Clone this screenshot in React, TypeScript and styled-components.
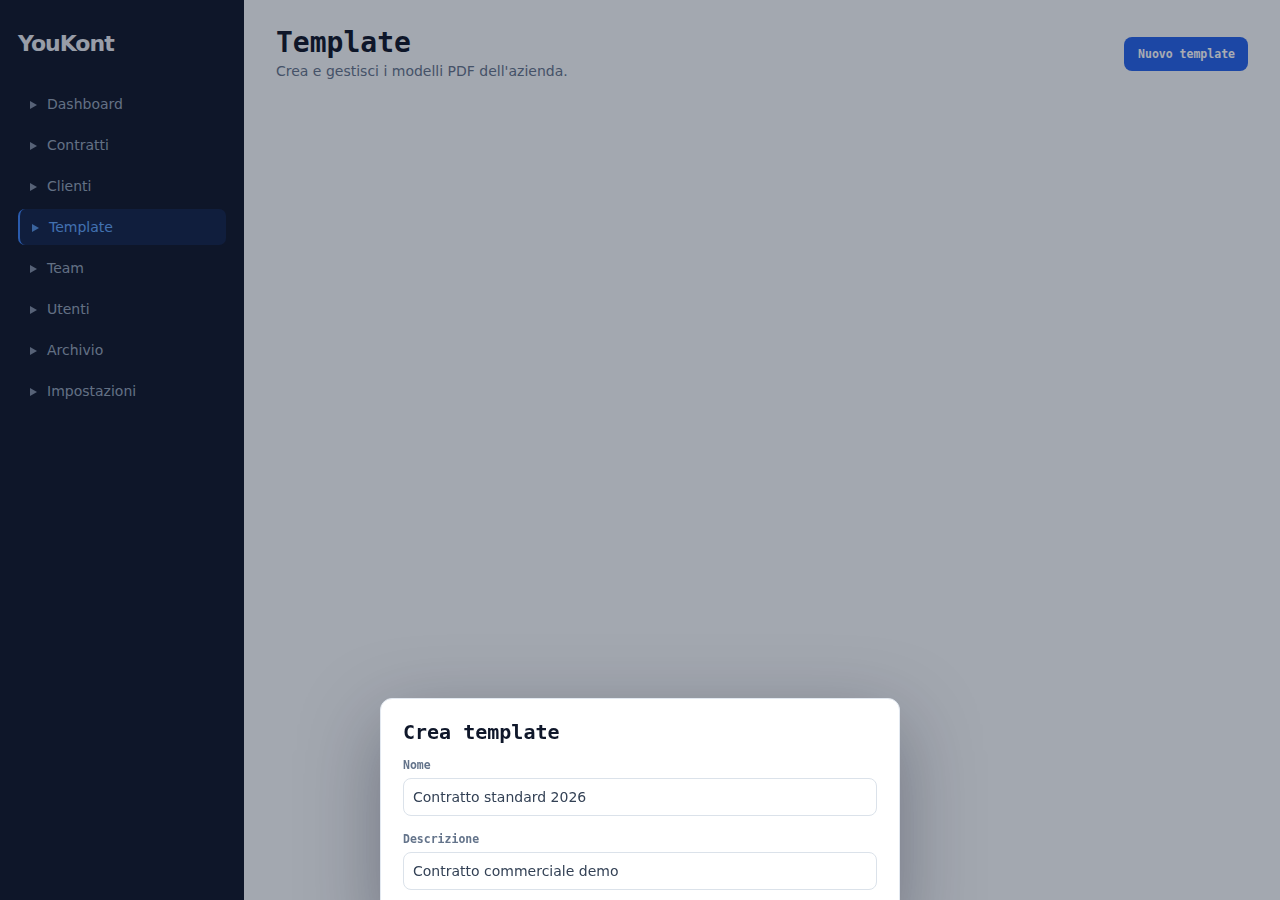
import React from "react";
import styled, { createGlobalStyle } from "styled-components";

const GlobalStyle = createGlobalStyle`
  html, body {
    margin: 0;
    padding: 0;
    background: #f8fafc;
    font-family: "DejaVu Sans", "Noto Sans", sans-serif;
    color: #0f172a;
  }
  * { box-sizing: border-box; }
`;

const MONO = `"DejaVu Sans Mono", "Liberation Mono", monospace`;

const Shell = styled.div`
  display: grid;
  grid-template-columns: 244px 1fr;
  min-height: 100vh;
`;

const Sidebar = styled.aside`
  background: #0f172a;
  padding: 31px 18px 30px;
  display: flex;
  flex-direction: column;
`;

const Brand = styled.div`
  font-family: "DejaVu Sans", sans-serif;
  font-weight: 700;
  font-size: 22px;
  line-height: 26px;
  letter-spacing: -1px;
  color: #e6eaf0;
  margin-bottom: 29px;
`;

const Nav = styled.nav`
  display: flex;
  flex-direction: column;
  gap: 5px;
`;

const NavItem = styled.a<{ $active?: boolean }>`
  display: flex;
  align-items: center;
  gap: 10px;
  height: 36px;
  padding-left: 12px;
  border-radius: 7px;
  font-size: 14px;
  text-decoration: none;
  color: ${(p) => (p.$active ? "#60a5fa" : "#94a3b8")};
  background: ${(p) => (p.$active ? "rgba(37, 99, 235, 0.16)" : "transparent")};
  border-left: ${(p) => (p.$active ? "2px solid #3b82f6" : "0")};
  cursor: pointer;
`;

const Caret = styled.span`
  width: 0;
  height: 0;
  border-top: 4px solid transparent;
  border-bottom: 4px solid transparent;
  border-left: 7px solid currentColor;
  opacity: 0.85;
  margin-top: 1px;
`;

const Main = styled.main`
  padding: 26px 32px;
`;

const Header = styled.header`
  display: flex;
  justify-content: space-between;
  align-items: center;
`;

const TitleBlock = styled.div`
  display: flex;
  flex-direction: column;
`;

const Title = styled.h1`
  margin: 0;
  font-family: ${MONO};
  font-weight: 700;
  font-size: 28px;
  line-height: 34px;
  color: #0f172a;
`;

const Subtitle = styled.p`
  margin: 2px 0 0;
  font-size: 14px;
  line-height: 18px;
  color: #64748b;
`;

const PrimaryButton = styled.button`
  font-family: ${MONO};
  font-weight: 700;
  font-size: 11.5px;
  line-height: 14px;
  color: #ffffff;
  background: #2563eb;
  border: 0;
  border-radius: 8px;
  padding: 10px 13px 10px 14px;
  cursor: pointer;
  margin-top: 2px;
`;

const Overlay = styled.div`
  position: fixed;
  inset: 0;
  background: rgba(15, 23, 42, 0.36);
  display: flex;
  justify-content: center;
  align-items: flex-start;
  padding-top: 698px;
  overflow: hidden;
`;

const Dialog = styled.div`
  width: 520px;
  background: #ffffff;
  border: 1px solid #e2e8f0;
  border-radius: 12px;
  padding: 20px 22px 22px;
  box-shadow: 0 24px 80px rgba(15, 23, 42, 0.35);
`;

const DialogTitle = styled.h2`
  margin: 0 0 13px;
  font-family: ${MONO};
  font-weight: 700;
  font-size: 20px;
  line-height: 26px;
  color: #0f172a;
`;

const Field = styled.label`
  display: flex;
  flex-direction: column;
  gap: 6px;
  margin-bottom: 16px;
`;

const FieldLabel = styled.span`
  font-family: ${MONO};
  font-weight: 700;
  font-size: 11.5px;
  line-height: 14px;
  color: #64748b;
`;

const Input = styled.input`
  height: 38px;
  padding: 0 9px;
  border: 1px solid #dbe2ea;
  border-radius: 8px;
  font-family: "DejaVu Sans", sans-serif;
  font-size: 14px;
  color: #334155;
  background: #ffffff;
  outline: none;
`;

const navItems = [
  "Dashboard",
  "Contratti",
  "Clienti",
  "Template",
  "Team",
  "Utenti",
  "Archivio",
  "Impostazioni",
];

export default function App() {
  return (
    <>
      <GlobalStyle />
      <Shell>
        <Sidebar>
          <Brand>YouKont</Brand>
          <Nav>
            {navItems.map((item) => (
              <NavItem key={item} $active={item === "Template"}>
                <Caret />
                {item}
              </NavItem>
            ))}
          </Nav>
        </Sidebar>
        <Main>
          <Header>
            <TitleBlock>
              <Title>Template</Title>
              <Subtitle>Crea e gestisci i modelli PDF dell'azienda.</Subtitle>
            </TitleBlock>
            <PrimaryButton>Nuovo template</PrimaryButton>
          </Header>
        </Main>
      </Shell>
      <Overlay>
        <Dialog>
          <DialogTitle>Crea template</DialogTitle>
          <Field>
            <FieldLabel>Nome</FieldLabel>
            <Input defaultValue="Contratto standard 2026" />
          </Field>
          <Field>
            <FieldLabel>Descrizione</FieldLabel>
            <Input defaultValue="Contratto commerciale demo" />
          </Field>
        </Dialog>
      </Overlay>
    </>
  );
}
